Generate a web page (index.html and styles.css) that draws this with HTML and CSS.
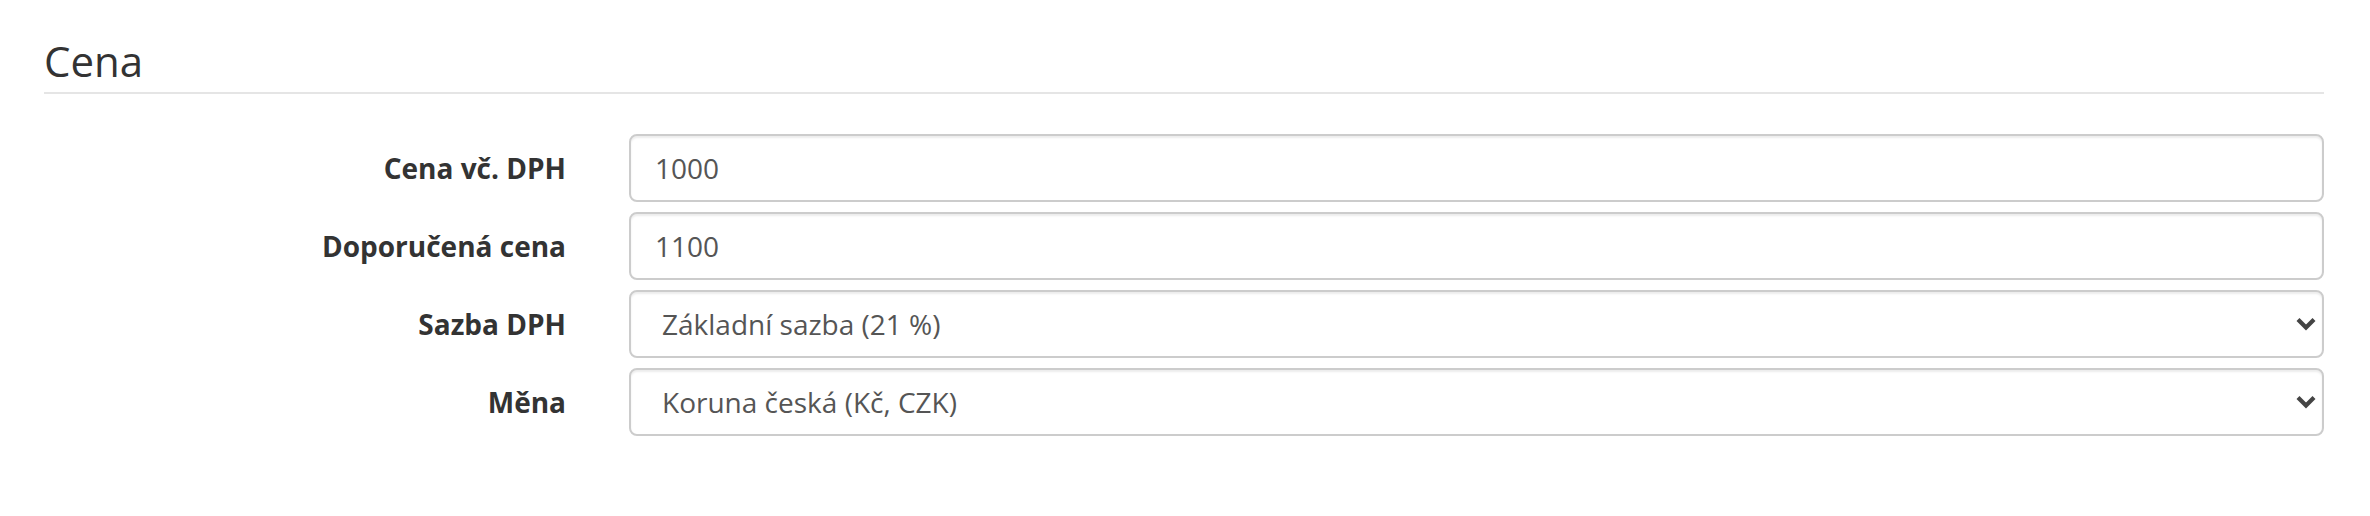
FILE: index.html
```html
<!DOCTYPE html>
<html lang="cs">
<head>
<meta charset="utf-8">
<title>Cena</title>
<link rel="stylesheet" href="styles.css">
</head>
<body>
<div class="page">
  <h2 class="section-title">Cena</h2>
  <form class="form">
    <div class="row">
      <label class="label" for="f1">Cena vč. DPH</label>
      <input class="control" id="f1" type="text" value="1000">
    </div>
    <div class="row">
      <label class="label" for="f2">Doporučená cena</label>
      <input class="control" id="f2" type="text" value="1100">
    </div>
    <div class="row">
      <label class="label" for="f3">Sazba DPH</label>
      <div class="select-wrap">
        <select class="control select" id="f3">
          <option>Základní sazba (21 %)</option>
        </select>
        <svg class="chev" width="20" height="14" viewBox="0 0 20 14"><polyline points="2,2.5 10,10.5 18,2.5" fill="none" stroke="#444" stroke-width="4.2"/></svg>
      </div>
    </div>
    <div class="row">
      <label class="label" for="f4">Měna</label>
      <div class="select-wrap">
        <select class="control select" id="f4">
          <option>Koruna česká (Kč, CZK)</option>
        </select>
        <svg class="chev" width="20" height="14" viewBox="0 0 20 14"><polyline points="2,2.5 10,10.5 18,2.5" fill="none" stroke="#444" stroke-width="4.2"/></svg>
      </div>
    </div>
  </form>
</div>
</body>
</html>
```

FILE: styles.css
```css
html, body {
  margin: 0;
  padding: 0;
  background: #fff;
}
body {
  font-family: "Open Sans", "Liberation Sans", sans-serif;
  color: #333;
}
.page {
  width: 2280px;
  padding-left: 44px;
}
.section-title {
  margin: 35px 0 0 0;
  padding: 0 0 5px 0;
  font-size: 42px;
  line-height: 52px;
  font-weight: 400;
  color: #333;
  border-bottom: 2px solid #e5e5e5;
}
.form {
  margin-top: 40px;
  display: flex;
  flex-direction: column;
  gap: 10px;
}
.row {
  display: grid;
  grid-template-columns: 522px 1fr;
  column-gap: 63px;
  height: 68px;
}
.label {
  text-align: right;
  font-size: 28px;
  font-weight: 700;
  line-height: 68px;
  color: #333;
}
.control {
  box-sizing: border-box;
  width: 100%;
  height: 68px;
  margin: 0;
  padding: 0 24px;
  font-family: "Open Sans", "Liberation Sans", sans-serif;
  font-size: 28px;
  color: #555;
  background: #fff;
  border: 2px solid #ccc;
  border-radius: 8px;
  box-shadow: inset 0 2px 2px rgba(0, 0, 0, 0.075);
  outline: none;
}
.select-wrap {
  position: relative;
}
.select {
  -webkit-appearance: none;
  appearance: none;
  padding-left: 31px;
  padding-right: 60px;
}
.chev {
  position: absolute;
  right: 8px;
  top: 27px;
  pointer-events: none;
}
```
